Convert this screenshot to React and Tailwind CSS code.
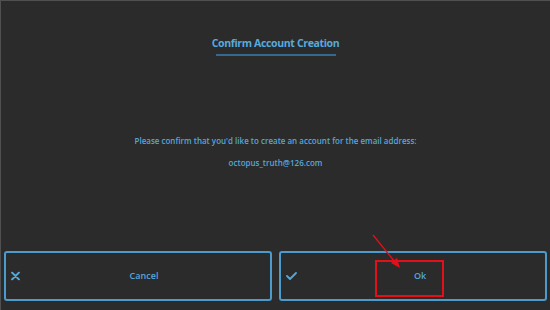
export default function App() {
  return (
    <div className="relative w-[550px] h-[310px] bg-[#2b2b2b] border-t border-l border-[#505050] flex flex-col font-['Open_Sans',sans-serif] overflow-hidden">
      <div className="pt-[34px] text-center text-[10.5px] leading-[16px] font-bold text-[#58aadd] tracking-[-0.35px]">
        Confirm Account Creation
      </div>
      <div className="mx-auto mt-[3px] w-[120px] h-[2px] bg-[#35698f]" />
      <div className="mt-[79px] text-center text-[8px] leading-[12px] font-semibold text-[#55a7da]">
        Please confirm that you'd like to create an account for the email address:
      </div>
      <div className="mt-[10px] text-center text-[8px] leading-[12px] font-semibold text-[#55a7da]">
        octopus_truth@126.com
      </div>
      <div className="flex-1" />
      <div className="flex h-[50px] mb-[9px] pl-[3px] pr-[3px] gap-[7px]">
        <div className="relative flex-1 border-2 border-[#4b9bcc] rounded-[3px] flex items-center justify-center">
          <svg className="absolute left-[5px] top-1/2 -translate-y-1/2" width="9" height="9" viewBox="0 0 9 9">
            <path d="M1 1 L8 8 M8 1 L1 8" stroke="#55a7da" strokeWidth="1.8" strokeLinecap="round" />
          </svg>
          <span className="pl-[12px] text-[9px] font-semibold text-[#55a7da]">Cancel</span>
        </div>
        <div className="relative flex-1 border-2 border-[#4b9bcc] rounded-[3px] flex items-center justify-center">
          <svg className="absolute left-[5px] top-1/2 -translate-y-1/2" width="11" height="8" viewBox="0 0 11 8">
            <path d="M1 4 L4 7 L10 1" stroke="#55a7da" strokeWidth="1.8" fill="none" strokeLinecap="round" strokeLinejoin="round" />
          </svg>
          <span className="pl-[14px] text-[9px] font-semibold text-[#55a7da]">Ok</span>
        </div>
      </div>
      <div className="absolute left-[374px] top-[259px] w-[69px] h-[37px] border-2 border-[#e3101a]" />
      <svg className="absolute left-0 top-0" width="550" height="310" viewBox="0 0 550 310">
        <path d="M372 234 L394 261" stroke="#e3101a" strokeWidth="1.3" />
        <path d="M399 267 L390 262 L396 257 Z" fill="#e3101a" />
      </svg>
    </div>
  );
}
